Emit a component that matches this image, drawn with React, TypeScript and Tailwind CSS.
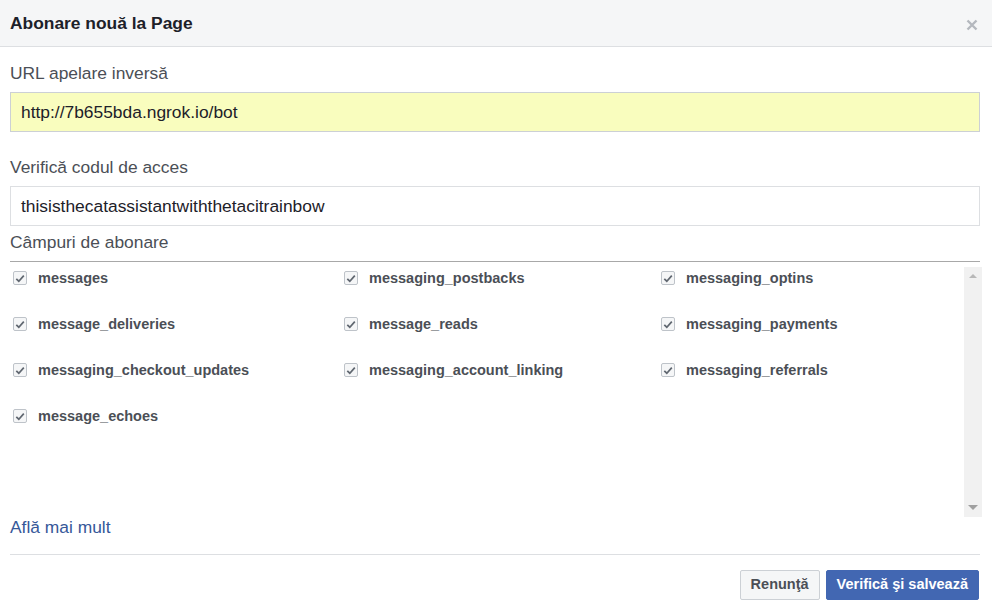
import React from 'react';

const fields = [
  'messages',
  'messaging_postbacks',
  'messaging_optins',
  'message_deliveries',
  'message_reads',
  'messaging_payments',
  'messaging_checkout_updates',
  'messaging_account_linking',
  'messaging_referrals',
  'message_echoes',
];

const CheckBox = () => (
  <span className="flex h-[14px] w-[14px] shrink-0 items-center justify-center rounded-[2px] border border-[#bec3c9] bg-[#f5f6f7]">
    <svg width="10" height="9" viewBox="0 0 10 9">
      <path d="M1.3 4.8 L3.8 7.2 L8.8 1.6" fill="none" stroke="#606770" strokeWidth="1.7" />
    </svg>
  </span>
);

export default function App() {
  return (
    <div className="h-[610px] w-[992px] bg-white font-['Liberation_Sans',Arial,sans-serif] text-[#4b4f56]">
      {/* Header */}
      <div className="flex h-[47px] items-center justify-between border-b border-[#dddfe2] bg-[#f5f6f7] pl-[10px] pr-[14px]">
        <h1 className="text-[17.4px] font-bold text-[#1d2129]">Abonare nouă la Page</h1>
        <svg width="12" height="12" viewBox="0 0 12 12" className="mt-[3px]">
          <path d="M1.5 1.5 L10.5 10.5 M10.5 1.5 L1.5 10.5" stroke="#b4b8be" strokeWidth="2.4" />
        </svg>
      </div>

      <div className="pl-[10px] pr-[12px]">
        <div className="mt-[15px] text-[17.4px] leading-[22px]">URL apelare inversă</div>
        <div className="mt-[8px] flex h-[40px] items-center border border-[#ccd0d5] bg-[#f9fdbe] px-[10px] text-[17.4px] text-[#1d2129]">
          http://7b655bda.ngrok.io/bot
        </div>

        <div className="mt-[24px] text-[17.4px] leading-[22px]">Verifică codul de acces</div>
        <div className="mt-[8px] flex h-[40px] items-center border border-[#dddfe2] bg-white px-[10px] text-[17.4px] text-[#1d2129]">
          thisisthecatassistantwiththetacitrainbow
        </div>

        <div className="mt-[5px] border-b border-[#a8a8a8] pb-[8px] text-[17.4px] leading-[22px]">
          Câmpuri de abonare
        </div>

        {/* Fields */}
        <div className="mr-[-2px] mt-[5px] flex h-[250px]">
          <div className="grid flex-1 grid-cols-[331px_317px_1fr] content-start gap-y-[32px] pl-[3px] pt-[4px]">
            {fields.map((f) => (
              <div key={f} className="flex h-[14px] items-center gap-[11px]">
                <CheckBox />
                <span className="text-[14.5px] font-bold leading-[14px] text-[#4b4f56]">{f}</span>
              </div>
            ))}
          </div>
          <div className="flex w-[18px] flex-col items-center justify-between bg-[#f1f1f1] py-[7px]">
            <span className="h-0 w-0 border-x-[4px] border-b-[4px] border-x-transparent border-b-[#b8b8b8]" />
            <span className="h-0 w-0 border-x-[5px] border-t-[5px] border-x-transparent border-t-[#a0a0a0]" />
          </div>
        </div>

        <a className="block text-[17.4px] leading-[20px] text-[#365899]">Află mai mult</a>

        <div className="mt-[17px] border-t border-[#dddfe2]" />

        <div className="mr-[1px] mt-[15px] flex justify-end gap-[6px]">
          <button className="h-[30px] rounded-[2px] border border-[#ccd0d5] bg-[#f5f6f7] px-[10px] text-[14.5px] font-bold text-[#4b4f56]">
            Renunţă
          </button>
          <button className="h-[30px] rounded-[2px] border border-[#4267b2] bg-[#4267b2] px-[10px] text-[14.5px] font-bold text-white">
            Verifică şi salvează
          </button>
        </div>
      </div>
    </div>
  );
}
